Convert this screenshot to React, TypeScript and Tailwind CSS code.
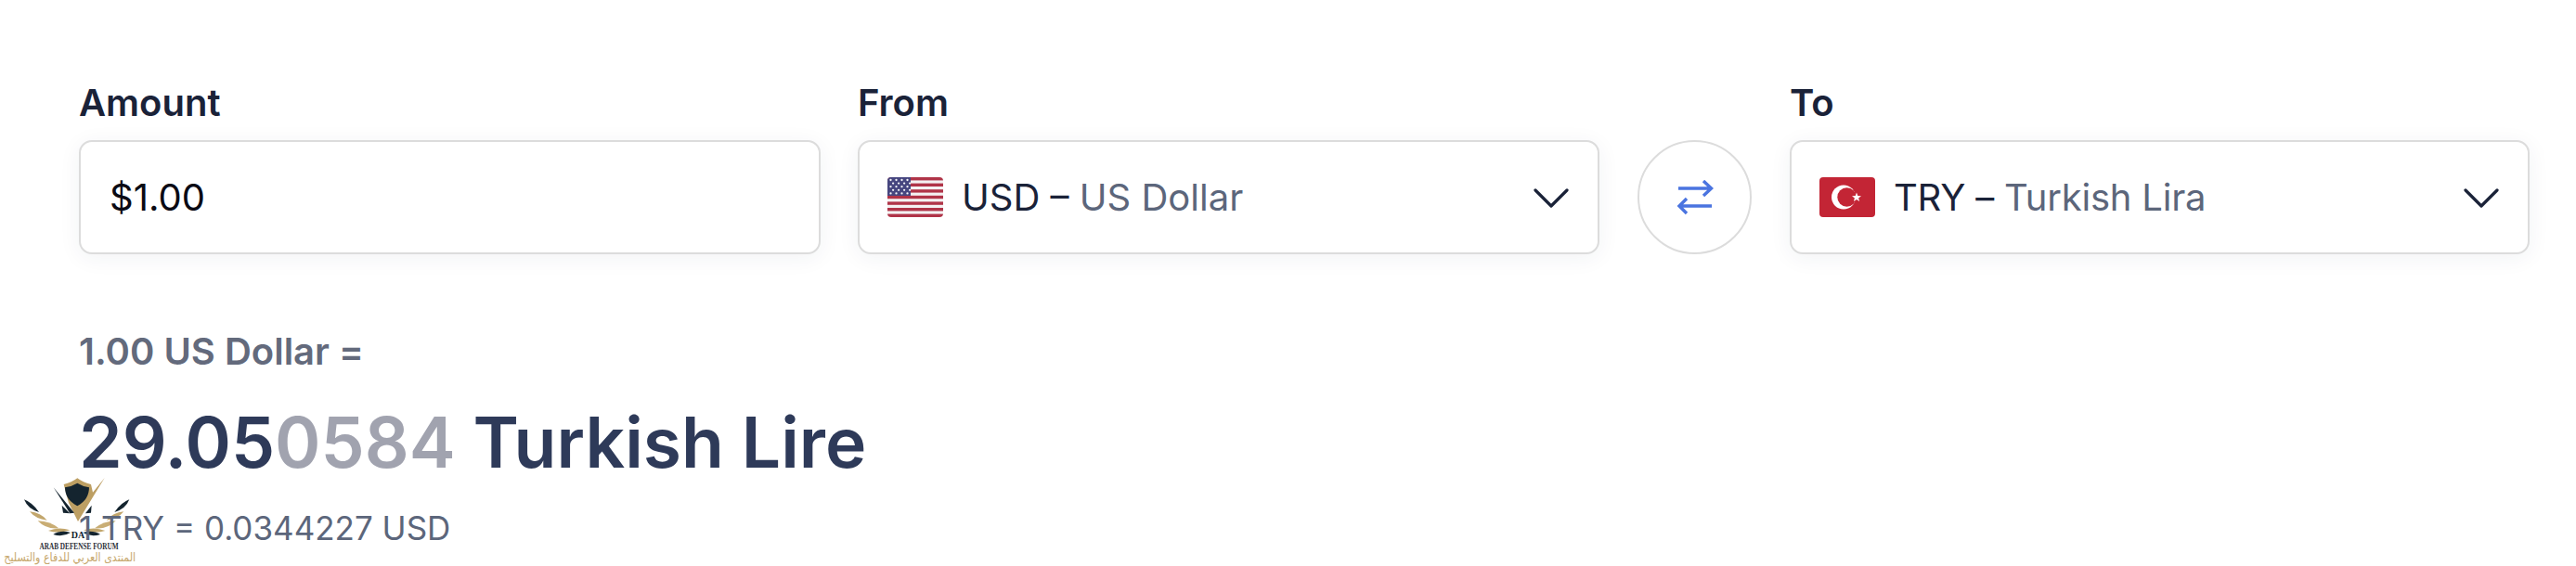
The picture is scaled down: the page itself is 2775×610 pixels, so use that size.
const Chevron = () => (
  <svg width="38" height="22" viewBox="0 0 38 22" fill="none" className="shrink-0">
    <path d="M2 3 L19 20 L36 3" stroke="#1a2238" strokeWidth="3.2" strokeLinecap="round" strokeLinejoin="round" />
  </svg>
);

const UsFlag = () => (
  <svg width="60" height="43" viewBox="0 0 60 43" className="shrink-0">
    <defs>
      <clipPath id="us"><rect width="60" height="43" rx="4" /></clipPath>
    </defs>
    <g clipPath="url(#us)">
      <rect width="60" height="43" fill="#f4f1f2" />
      {[0, 6.6, 13.2, 19.8, 26.4, 33, 39.6].map((y) => (
        <rect key={y} x="0" y={y} width="60" height="3.4" fill="#b03448" />
      ))}
      <rect width="25" height="20" fill="#46467f" />
      {[0, 1, 2, 3, 4].map((r) =>
        [0, 1, 2, 3].map((c) => (
          <circle key={`${r}-${c}`} cx={3.5 + c * 6 + (r % 2 ? 2.6 : 0)} cy={3 + r * 3.6} r="1.15" fill="#f3f3f8" />
        ))
      )}
    </g>
  </svg>
);

const TrFlag = () => (
  <svg width="60" height="43" viewBox="0 0 60 43" className="shrink-0">
    <rect width="60" height="43" rx="4" fill="#c32535" />
    <circle cx="26" cy="21.5" r="13" fill="#ffffff" />
    <circle cx="29.5" cy="21.5" r="10.2" fill="#c32535" />
    <polygon
      points="40,16.5 41.3,20 45,20.2 42.1,22.5 43.1,26 40,24 36.9,26 37.9,22.5 35,20.2 38.7,20"
      fill="#ffffff"
    />
  </svg>
);

const SwapIcon = () => (
  <svg width="40" height="38" viewBox="0 0 40 38" fill="none">
    <path d="M2 9 H37.5 M29 1 L37.5 9 L29 17" stroke="#4a74e0" strokeWidth="3.4" />
    <path d="M38 28 H3 M11 20 L3 28 L11 36" stroke="#4a74e0" strokeWidth="3.4" />
  </svg>
);

const Wing = () => (
  <g>
    <path d="M18 85 Q45 95 66 126 Q30 116 18 85 Z" fill="#14242f" />
    <path d="M36 124 Q72 128 92 152 Q55 148 36 124 Z" fill="#c2a66c" />
    <path d="M62 154 Q104 156 130 178 Q88 182 62 154 Z" fill="#c9ad74" />
    <path d="M96 186 Q130 172 166 184 Q130 196 96 186 Z" fill="#c2a66c" />
    <path d="M112 198 Q136 182 168 192 Q142 208 112 198 Z" fill="#14242f" />
  </g>
);

const Logo = () => (
  <div className="absolute left-[20px] top-[510px] w-[130px] h-[100px] pointer-events-none">
    <svg width="130" height="100" viewBox="0 0 390 300" className="absolute left-0 top-0">
      <path d="M146 36 Q172 30 190 16 Q208 30 234 36 L240 62 L278 15 L192 156 L162 96 Z" fill="#bd9f63" />
      <path d="M150 46 Q174 42 190 32 Q206 42 228 46 Q228 86 190 106 Q150 86 150 46 Z" fill="#14242f" />
      <path d="M113 46 L180 128 L166 130 Z" fill="#14242f" />
      <path d="M140 104 L166 130 L144 128 Z" fill="#14242f" />
      <path d="M236 104 L216 130 L234 128 Z" fill="#14242f" />
      <Wing />
      <g transform="translate(376 0) scale(-1 1)">
        <Wing />
      </g>
    </svg>
    <div className="absolute left-[49px] top-[61px] w-[30px] text-center text-[10px] leading-[11px] font-bold text-[#14242f] [font-family:'Liberation_Serif',serif]">DA</div>
    <div className="absolute left-[0px] top-[73px] w-[130px] text-center whitespace-nowrap text-[11px] leading-[11px] font-bold text-[#2b3038] scale-x-[0.66] [font-family:'Liberation_Serif',serif]">ARAB DEFENSE FORUM</div>
    <div dir="rtl" className="absolute left-[-8px] top-[83px] w-[145px] text-center whitespace-nowrap text-[13px] leading-[16px] text-[#c7a86e] scale-x-[0.85] [font-family:'DejaVu_Sans',sans-serif]">المنتدى العربي للدفاع والتسليح</div>
  </div>
);

const boxCls =
  "h-[123px] flex items-center rounded-[14px] border-2 border-[#dcdcdc] bg-white shadow-[0_4px_24px_rgba(35,55,80,0.06)]";
const labelCls = "h-[64px] text-[40px] leading-[48px] font-semibold text-[#1a2238]";

export default function App() {
  return (
    <div className="relative w-[2775px] h-[610px] overflow-hidden bg-white [font-family:Inter,sans-serif]">
      <Logo />
      <div className="relative pt-[87px] pl-[85px]">
        <div className="flex items-end gap-[40px]">
          <div className="w-[799px] shrink-0">
            <div className={labelCls}>Amount</div>
            <div className={`${boxCls} pl-[31px] text-[40px] text-[#0a0a14]`}>$1.00</div>
          </div>
          <div className="w-[799px] shrink-0">
            <div className={labelCls}>From</div>
            <div className={`${boxCls} pl-[30px] pr-[31px] text-[40px]`}>
              <UsFlag />
              <span className="ml-[20px] flex-1 text-[#1a2238]">
                USD – <span className="text-[#5c667b]">US Dollar</span>
              </span>
              <Chevron />
            </div>
          </div>
          <div className="ml-[1px] h-[123px] w-[123px] shrink-0 flex items-center justify-center rounded-full border-2 border-[#dcdcdc] bg-white">
            <SwapIcon />
          </div>
          <div className="ml-[1px] w-[797px] shrink-0">
            <div className={labelCls}>To</div>
            <div className={`${boxCls} pl-[30px] pr-[31px] text-[40px]`}>
              <TrFlag />
              <span className="ml-[20px] flex-1 text-[#1a2238] tracking-[-0.2px]">
                TRY – <span className="text-[#5c667b]">Turkish Lira</span>
              </span>
              <Chevron />
            </div>
          </div>
        </div>
        <div className="mt-[81px] text-[40px] leading-[48px] font-semibold text-[#636a7c]">1.00 US Dollar =</div>
        <div className="mt-[29px] text-[75px] leading-[90px] font-semibold text-[#2e3a59] whitespace-nowrap">
          29.05<span className="text-[#a1a3af]">0584</span> Turkish Lire
        </div>
        <div className="mt-[25px] text-[35px] leading-[44px] text-[#5c667b]">1 TRY = 0.0344227 USD</div>
      </div>
    </div>
  );
}
